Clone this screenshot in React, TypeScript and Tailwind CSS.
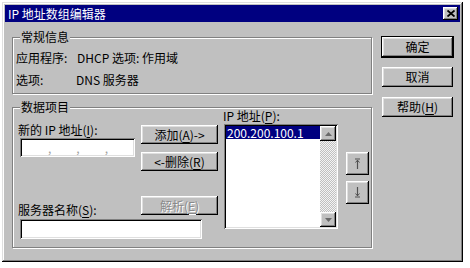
import React from "react";

const raised =
  "shadow-[inset_-1px_-1px_0_#000,inset_1px_1px_0_#fff,inset_-2px_-2px_0_#808080,inset_2px_2px_0_#dfdfdf]";
const sunken =
  "shadow-[inset_1px_1px_0_#808080,inset_-1px_-1px_0_#fff,inset_2px_2px_0_#000,inset_-2px_-2px_0_#dfdfdf]";

function U({ c }: { c: string }) {
  return <span className="underline underline-offset-2">{c}</span>;
}

function Btn({
  children,
  w,
  h,
  def,
  disabled,
}: {
  children: React.ReactNode;
  w: string;
  h: string;
  def?: boolean;
  disabled?: boolean;
}) {
  return (
    <div
      className={`${w} ${h} bg-[#c0c0c0] flex items-center justify-center ${raised} ${
        def ? "outline outline-1 outline-black" : ""
      } ${disabled ? "text-[#8a8a8a] [text-shadow:1px_1px_0_#fff]" : "text-black"}`}
    >
      {children}
    </div>
  );
}

function Group({
  title,
  className,
  children,
}: {
  title: string;
  className: string;
  children: React.ReactNode;
}) {
  return (
    <div
      className={`relative border border-[#808080] shadow-[1px_1px_0_#fff,inset_1px_1px_0_#fff] ${className}`}
    >
      <span className="absolute left-[7px] top-[-9px] bg-[#c0c0c0] px-[1px] leading-[16px]">
        {title}
      </span>
      {children}
    </div>
  );
}

function ArrowBtn({ down }: { down?: boolean }) {
  return (
    <div className={`w-[23px] h-[23px] bg-[#c0c0c0] flex items-center justify-center ${raised}`}>
      <svg width="7" height="11" viewBox="0 0 7 11" className={down ? "rotate-180" : ""}>
        <path d="M1 1h5" stroke="#505050" strokeWidth="1" />
        <path d="M3.5 2v9" stroke="#505050" strokeWidth="1.2" />
        <path d="M1.5 4.5L3.5 2.2L5.5 4.5" stroke="#505050" strokeWidth="1" fill="none" />
      </svg>
    </div>
  );
}

function ScrollArrow({ down }: { down?: boolean }) {
  return (
    <div className={`w-[16px] h-[15px] bg-[#c0c0c0] flex items-center justify-center ${raised}`}>
      <svg width="7" height="4" viewBox="0 0 7 4" className={down ? "rotate-180" : ""}>
        <path d="M3.5 0L7 4H0z" fill="#6a6a6a" />
      </svg>
    </div>
  );
}

export default function App() {
  return (
    <div
      className="w-[470px] h-[268px] bg-white pl-[2px] pt-[2px] text-[12px] leading-[16px] text-black"
      style={{ fontFamily: '"Noto Sans CJK SC", "DejaVu Sans", sans-serif' }}
    >
      <div
        className={`w-[461px] h-[260px] bg-[#c0c0c0] p-[3px] flex flex-col shadow-[inset_-1px_-1px_0_#000,inset_1px_1px_0_#dfdfdf,inset_-2px_-2px_0_#808080,inset_2px_2px_0_#fff]`}
      >
        {/* Title bar */}
        <div className="h-[17px] bg-[#000080] flex items-center justify-between pl-[3px] pr-[2px]">
          <span className="text-white leading-[16px]">IP 地址数组编辑器</span>
          <div className={`w-[15px] h-[13px] bg-[#c0c0c0] flex items-center justify-center ${raised}`}>
            <svg width="8" height="7" viewBox="0 0 8 7">
              <path d="M0.5 0.5L7.5 6.5M7.5 0.5L0.5 6.5" stroke="#000" strokeWidth="1.8" />
            </svg>
          </div>
        </div>

        {/* Body */}
        <div className="flex flex-row">
          <div className="ml-[7px] mt-[15px] flex flex-col">
            <Group title="常规信息" className="w-[360px] h-[57px] pt-[12px] pl-[3px]">
              <div className="flex flex-col gap-[6px]">
                <div className="flex">
                  <span className="w-[61px]">应用程序:</span>
                  <span>DHCP 选项: 作用域</span>
                </div>
                <div className="flex">
                  <span className="w-[60px]">选项:</span>
                  <span>DNS 服务器</span>
                </div>
              </div>
            </Group>

            <Group title="数据项目" className="mt-[13px] w-[360px] h-[141px]">
              <div className="flex flex-row">
                {/* Left column */}
                <div className="w-[206px] flex flex-col">
                  <div className="flex flex-row mt-[14px]">
                    <div className="w-[128px] flex flex-col">
                      <span className="ml-[5px]">
                        新的 IP 地址(<U c="I" />):
                      </span>
                      <div
                        className={`ml-[7px] w-[115px] h-[19px] bg-white ${sunken} flex items-center text-[#a0a0a0]`}
                      >
                        <span className="ml-[28px]">,</span>
                        <span className="ml-[25px]">,</span>
                        <span className="ml-[25px]">,</span>
                      </div>
                    </div>
                    <div className="flex flex-col">
                      <div className="mt-[3px]">
                        <Btn w="w-[77px]" h="h-[19px]">
                          添加(<U c="A" />)-&gt;
                        </Btn>
                      </div>
                      <div className="mt-[8px]">
                        <Btn w="w-[77px]" h="h-[19px]">
                          &lt;-删除(<U c="R" />)
                        </Btn>
                      </div>
                    </div>
                  </div>
                  <div className="flex flex-row mt-[25px]">
                    <div className="w-[128px] pt-[6px]">
                      <span className="ml-[5px]">
                        服务器名称(<U c="S" />):
                      </span>
                    </div>
                    <Btn w="w-[77px]" h="h-[19px]" disabled>
                      解析(<U c="E" />)
                    </Btn>
                  </div>
                  <div className={`mt-[1px] ml-[7px] w-[182px] h-[20px] bg-white ${sunken}`} />
                </div>

                {/* List column */}
                <div className="flex flex-col">
                  <span className="ml-[4px]">
                    IP 地址(<U c="P" />):
                  </span>
                  <div className={`ml-[5px] w-[114px] h-[105px] bg-white ${sunken} p-[2px] flex flex-row`}>
                    <div className="flex-1">
                      <div className="h-[13px] leading-[13px] bg-[#000080] text-white pl-[1px]">
                        200.200.100.1
                      </div>
                    </div>
                    <div className="w-[16px] flex flex-col justify-between bg-[repeating-conic-gradient(#c0c0c0_0_25%,#f4f4f4_0_50%)] bg-[length:2px_2px]">
                      <ScrollArrow />
                      <ScrollArrow down />
                    </div>
                  </div>
                </div>

                {/* Arrow buttons */}
                <div className="ml-[8px] mt-[44px] flex flex-col gap-[6px]">
                  <ArrowBtn />
                  <ArrowBtn down />
                </div>
              </div>
            </Group>
          </div>

          {/* Right buttons */}
          <div className="ml-[10px] mt-[15px] flex flex-col gap-[10px]">
            <Btn w="w-[71px]" h="h-[20px]" def>
              确定
            </Btn>
            <Btn w="w-[71px]" h="h-[20px]">
              取消
            </Btn>
            <Btn w="w-[71px]" h="h-[20px]">
              帮助(<U c="H" />)
            </Btn>
          </div>
        </div>
      </div>
    </div>
  );
}
